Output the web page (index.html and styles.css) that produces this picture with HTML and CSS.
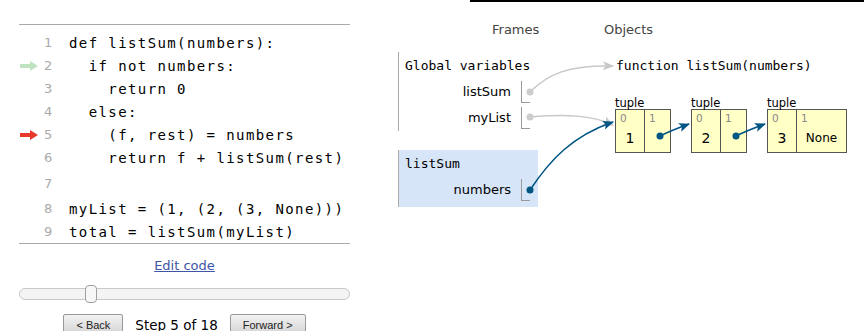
FILE: index.html
```html
<!DOCTYPE html>
<html lang="en">
<head>
    <meta charset="UTF-8">
    <title>listSum - Visualizer</title>
    <link rel="stylesheet" href="styles.css">
</head>
<body>
    <div class="rule"></div>
    <div class="app">
        <div class="left">
            <div class="code">
                <div class="line"><span class="gutter"></span><span class="num">1</span><span class="src">def listSum(numbers):</span></div>
                <div class="line"><span class="gutter"><svg width="18" height="10" viewBox="0 0 18 10"><path class="prev" d="M0 3H10V0L18 5L10 10V7H0Z"/></svg></span><span class="num">2</span><span class="src">  if not numbers:</span></div>
                <div class="line"><span class="gutter"></span><span class="num">3</span><span class="src">    return 0</span></div>
                <div class="line"><span class="gutter"></span><span class="num">4</span><span class="src">  else:</span></div>
                <div class="line"><span class="gutter"><svg width="18" height="10" viewBox="0 0 18 10"><path class="cur" d="M0 3H10V0L18 5L10 10V7H0Z"/></svg></span><span class="num">5</span><span class="src">    (f, rest) = numbers</span></div>
                <div class="line"><span class="gutter"></span><span class="num">6</span><span class="src">    return f + listSum(rest)</span></div>
                <div class="line blank"><span class="gutter"></span><span class="num">7</span><span class="src"> </span></div>
                <div class="line"><span class="gutter"></span><span class="num">8</span><span class="src">myList = (1, (2, (3, None)))</span></div>
                <div class="line"><span class="gutter"></span><span class="num">9</span><span class="src">total = listSum(myList)</span></div>
            </div>
            <div class="edit"><a href="#">Edit code</a></div>
            <div class="slider"><div class="handle"></div></div>
            <div class="nav">
                <button type="button">&lt; Back</button>
                <span class="step">Step 5 of 18</span>
                <button type="button">Forward &gt;</button>
            </div>
        </div>

        <div class="viz">
            <div class="frames">
                <div class="col-title">Frames</div>
                <div class="frame">
                    <div class="frame-title">Global variables</div>
                    <div class="var"><span class="var-name">listSum</span><span class="var-cell"></span></div>
                    <div class="var"><span class="var-name">myList</span><span class="var-cell"></span></div>
                </div>
                <div class="frame active">
                    <div class="frame-title">listSum</div>
                    <div class="var"><span class="var-name">numbers</span><span class="var-cell"></span></div>
                </div>
            </div>
            <div class="objects">
                <div class="col-title">Objects</div>
                <div class="func">function listSum(numbers)</div>
                <div class="heap">
                    <div class="tuple">
                        <div class="tuple-label">tuple</div>
                        <div class="tuple-box">
                            <div class="cell"><div class="idx">0</div><div class="val">1</div></div>
                            <div class="cell"><div class="idx">1</div></div>
                        </div>
                    </div>
                    <div class="tuple">
                        <div class="tuple-label">tuple</div>
                        <div class="tuple-box">
                            <div class="cell"><div class="idx">0</div><div class="val">2</div></div>
                            <div class="cell"><div class="idx">1</div></div>
                        </div>
                    </div>
                    <div class="tuple">
                        <div class="tuple-label">tuple</div>
                        <div class="tuple-box">
                            <div class="cell"><div class="idx">0</div><div class="val">3</div></div>
                            <div class="cell wide"><div class="idx">1</div><div class="val none">None</div></div>
                        </div>
                    </div>
                </div>
            </div>
        </div>
    </div>

    <!-- pointer arrows drawn over the frames and heap -->
    <svg class="arrows" width="864" height="331" viewBox="0 0 864 331">
        <defs>
            <marker id="headGray" markerUnits="userSpaceOnUse" markerWidth="11" markerHeight="9" refX="10" refY="4.5" orient="auto">
                <path d="M0 0L11 4.5L0 9L2.5 4.5Z" fill="#c8c8c8"/>
            </marker>
            <marker id="headBlue" markerUnits="userSpaceOnUse" markerWidth="11" markerHeight="9" refX="10" refY="4.5" orient="auto">
                <path d="M0 0L11 4.5L0 9L2.5 4.5Z" fill="#005583"/>
            </marker>
        </defs>
        <path class="ptr gray" d="M530 92C548 74 568 65 613 66" marker-end="url(#headGray)"/>
        <path class="ptr gray" d="M530 117C566 114 592 115 613 125" marker-end="url(#headGray)"/>
        <path class="ptr blue" d="M530 190C550 160 572 136 613 122" marker-end="url(#headBlue)"/>
        <path class="ptr blue" d="M660 136C670 131 678 128 689 124" marker-end="url(#headBlue)"/>
        <path class="ptr blue" d="M736 136C746 131 754 128 765 124" marker-end="url(#headBlue)"/>
        <circle cx="530" cy="92" r="3.5" fill="#cccccc"/>
        <circle cx="530" cy="117" r="3.5" fill="#cccccc"/>
        <circle cx="530" cy="190" r="3.5" fill="#005583"/>
        <circle cx="660" cy="136" r="3.5" fill="#005583"/>
        <circle cx="736" cy="136" r="3.5" fill="#005583"/>
    </svg>
</body>
</html>
```

FILE: styles.css
```css
* {
    margin: 0;
    padding: 0;
    box-sizing: border-box;
}

body {
    position: relative;
    font-family: "DejaVu Sans", Verdana, sans-serif;
    color: #000;
    background: #fff;
}

.rule {
    height: 2px;
    margin-left: 470px;
    background: #000;
}

.app {
    display: flex;
    align-items: flex-start;
}

/* code panel */
.left {
    width: 331px;
    margin-left: 19px;
    margin-top: 22px;
}

.code {
    border-top: 1px solid #aaa;
    border-bottom: 1px solid #aaa;
    padding-top: 6px;
}

.line {
    display: flex;
    align-items: center;
    height: 23px;
}

.line.blank {
    height: 28px;
}

.gutter {
    width: 25px;
    display: flex;
    align-items: center;
    padding-left: 1px;
}

.gutter svg {
    display: block;
}

.prev {
    fill: #bfe2c1;
}

.cur {
    fill: #e8382b;
}

.num {
    width: 25px;
    font-size: 13px;
    color: #aaa;
}

.src {
    font-family: "DejaVu Sans Mono", monospace;
    font-size: 14px;
    letter-spacing: 1.4px;
    white-space: pre;
}

.edit {
    margin-top: 14px;
    text-align: center;
    font-size: 13px;
    line-height: 16px;
}

.edit a {
    color: #3d56a6;
    text-decoration: underline;
}

.slider {
    position: relative;
    margin-top: 14px;
    height: 12px;
    border: 1px solid #c8c8c8;
    border-radius: 6px;
    background: #f4f4f4;
}

.handle {
    position: absolute;
    left: 65px;
    top: -4px;
    width: 12px;
    height: 18px;
    border: 1px solid #a0a0a0;
    border-radius: 4px;
    background: #f7f7f7;
}

.nav {
    margin-top: 14px;
    display: flex;
    justify-content: center;
    align-items: center;
    gap: 12px;
}

.nav button {
    height: 21px;
    padding: 0 12px;
    font-family: "Liberation Sans", Arial, sans-serif;
    font-size: 11px;
    color: #222;
    border: 1px solid #999;
    border-radius: 2px;
    background: linear-gradient(#f2f2f2, #d4d4d4);
}

.step {
    font-size: 13.5px;
}

/* frames and objects */
.viz {
    margin-left: 48px;
    display: flex;
}

.frames {
    width: 206px;
}

.col-title {
    margin-top: 20px;
    font-size: 13px;
    line-height: 16px;
    color: #444;
}

.frames .col-title {
    padding-left: 94px;
}

.frame {
    width: fit-content;
    margin-top: 14px;
    border-left: 1px solid #aaa;
    padding: 5px 8px 2px 6px;
}

.frame.active {
    margin-top: 19px;
    padding-bottom: 6px;
    background: #d6e5f8;
}

.frame-title {
    font-family: "DejaVu Sans Mono", monospace;
    font-size: 13px;
    line-height: 18px;
}

.var {
    display: flex;
    height: 22px;
    margin-top: 4px;
}

.frame-title + .var {
    margin-top: 6px;
}

.var-name {
    width: 106px;
    text-align: right;
    font-size: 13px;
    line-height: 22px;
}

.var-cell {
    width: 9px;
    margin-left: 10px;
    border-left: 1px solid #999;
    border-bottom: 1px solid #999;
}

.func {
    margin: 19px 0 0 12px;
    font-family: "DejaVu Sans Mono", monospace;
    font-size: 13px;
    line-height: 18px;
}

.heap {
    display: flex;
    gap: 20px;
    margin: 22px 0 0 11px;
}

.tuple-label {
    font-size: 11.5px;
    line-height: 12px;
}

.tuple-box {
    display: flex;
    border: 1px solid #555;
    background: #ffffc6;
}

.cell {
    width: 28px;
    height: 42px;
}

.cell + .cell {
    width: 26px;
    border-left: 1px solid #555;
}

.cell.wide {
    width: 50px;
}

.idx {
    margin: 2px 0 0 4px;
    font-size: 10.5px;
    line-height: 12px;
    color: #888;
}

.val {
    margin-top: 5px;
    text-align: center;
    font-size: 14px;
    line-height: 18px;
}

.val.none {
    font-size: 12px;
}

.arrows {
    position: absolute;
    top: 0;
    left: 0;
    pointer-events: none;
}

.ptr {
    fill: none;
    stroke-width: 1.5;
}

.ptr.gray {
    stroke: #c8c8c8;
}

.ptr.blue {
    stroke: #005583;
}
```
